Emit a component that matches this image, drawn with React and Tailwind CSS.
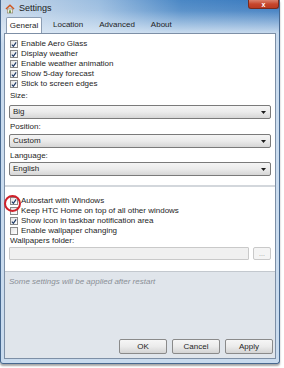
import React from 'react';

const font = { fontFamily: '"Segoe UI", "Liberation Sans", Arial, sans-serif' };

function Check({ checked }) {
  return (
    <span className="w-[8px] h-[8px] shrink-0 border border-[#8a8a8a] bg-gradient-to-br from-[#e4e4e4] to-white flex items-center justify-center">
      {checked && (
        <svg width="7" height="7" viewBox="0 0 7 7">
          <path d="M1 3.6 L2.8 5.6 L6 1" fill="none" stroke="#1f3a66" strokeWidth="1.4" />
        </svg>
      )}
    </span>
  );
}

function Row({ checked, children }) {
  return (
    <div className="h-[10px] flex items-center gap-[3px] text-[8px] text-[#1e1e1e] leading-none">
      <Check checked={checked} />
      <span>{children}</span>
    </div>
  );
}

function Select({ value }) {
  return (
    <div className="h-[14px] mr-[4px] -ml-[1px] rounded-[2px] border border-[#7a7a7a] bg-gradient-to-b from-[#f4f4f4] via-[#ebebeb] to-[#d6d6d6] flex items-center justify-between pl-[3px] pr-[4px] text-[8px] text-[#1e1e1e] leading-none">
      <span>{value}</span>
      <svg width="5" height="3" viewBox="0 0 5 3">
        <path d="M0 0 H5 L2.5 3 Z" fill="#1b1b1b" />
      </svg>
    </div>
  );
}

function Button({ children }) {
  return (
    <div className="w-[48px] h-[15px] rounded-[2px] border border-[#8a8a8a] bg-gradient-to-b from-[#f6f6f6] via-[#ebebeb] to-[#d4d4d4] flex items-center justify-center text-[8px] text-[#1e1e1e] leading-none">
      {children}
    </div>
  );
}

export default function App() {
  return (
    <div className="w-[284px] h-[368px] bg-white relative overflow-hidden" style={font}>
      <div className="w-[280px] h-[364px] flex flex-col border-l border-r border-b border-[#47688f] rounded-b-[3px] shadow-[0_2px_2px_rgba(0,0,0,0.35)] bg-[linear-gradient(to_bottom,rgba(255,255,255,0)_0%,rgba(255,255,255,0.1)_3%,rgba(221,233,245,0.85)_9%,#c9dbee_12%,#c9dbee_100%),linear-gradient(to_right,#c5d6e9_0%,#9bbde0_35%,#4a87c5_65%,#3a7abf_100%)]">
        <div className="h-[17px] flex items-center pl-[4px] gap-[4px] text-[9px] text-[#1b1b1b] leading-none">
          <svg width="10" height="10" viewBox="0 0 10 10">
            <path d="M1 5 L5 1.2 L9 5" fill="none" stroke="#d2561e" strokeWidth="1.5" />
            <rect x="2.3" y="5" width="5.4" height="4" fill="#f3efe4" stroke="#8a7a5a" strokeWidth="0.6" />
            <rect x="4.2" y="6.3" width="1.6" height="2.7" fill="#5a8b3a" />
          </svg>
          <span>Settings</span>
        </div>
        <div className="h-[16px] flex items-end pl-[5px] text-[8px] text-[#1e1e1e] leading-none">
          <div className="w-[36px] h-[16px] bg-white rounded-t-[2px] border-t border-l border-r border-[#8c9db3] flex items-center justify-center">General</div>
          <div className="h-[16px] flex items-center ml-[11px]">Location</div>
          <div className="h-[16px] flex items-center ml-[16px]">Advanced</div>
          <div className="h-[16px] flex items-center ml-[16px]">About</div>
        </div>
        <div className="flex-1 mx-[3px] mb-[4px] border border-[#7d8fa6] flex flex-col bg-[#e0e5eb]">
          <div className="h-[237px] bg-white flex flex-col pl-[5px]">
            <div className="pt-[5px]">
              <Row checked>Enable Aero Glass</Row>
              <Row checked>Display weather</Row>
              <Row checked>Enable weather animation</Row>
              <Row checked>Show 5-day forecast</Row>
              <Row checked>Stick to screen edges</Row>
            </div>
            <div className="mt-[2px] h-[10px] flex items-center text-[8px] text-[#1e1e1e] leading-none">Size:</div>
            <div className="mt-[4px]"><Select value="Big" /></div>
            <div className="mt-[3px] h-[10px] flex items-center text-[8px] text-[#1e1e1e] leading-none">Position:</div>
            <div className="mt-[2px]"><Select value="Custom" /></div>
            <div className="mt-[3px] h-[10px] flex items-center text-[8px] text-[#1e1e1e] leading-none">Language:</div>
            <div className="mt-[1px]"><Select value="English" /></div>
            <div className="mt-[9px] -ml-[5px] h-[2px] bg-[#d3d7dc]" />
            <div className="mt-[9px]">
              <Row checked>Autostart with Windows</Row>
              <Row>Keep HTC Home on top of all other windows</Row>
              <Row checked>Show icon in taskbar notification area</Row>
              <Row>Enable wallpaper changing</Row>
            </div>
            <div className="h-[10px] flex items-center text-[8px] text-[#1e1e1e] leading-none">Wallpapers folder:</div>
            <div className="mt-[1px] flex gap-[4px] pr-[4px] -ml-[1px]">
              <div className="flex-1 h-[13px] border border-[#c9c9c9] bg-[#f0f0f0] rounded-[1px]" />
              <div className="w-[18px] h-[13px] border border-[#c9c9c9] bg-[#f4f4f4] rounded-[2px] flex items-center justify-center text-[7px] text-[#9a9a9a] leading-none">...</div>
            </div>
          </div>
          <div className="h-[1px] bg-[#c3c8ce]" />
          <div className="flex-1 flex flex-col">
            <div className="mt-[5px] ml-[4px] h-[10px] flex items-center text-[8px] italic text-[#8a8f96] leading-none">Some settings will be applied after restart</div>
            <div className="flex-1" />
            <div className="flex justify-end gap-[5px] pr-[2px] pb-[4px]">
              <Button>OK</Button>
              <Button>Cancel</Button>
              <Button>Apply</Button>
            </div>
          </div>
        </div>
      </div>
      <div className="absolute left-[248px] top-0 w-[31px] h-[9px] rounded-b-[3px] border border-t-0 border-[#7a2a1e] bg-gradient-to-b from-[#d9806c] via-[#c7462c] to-[#b83a22] flex items-center justify-center text-white text-[7px] font-bold leading-none">x</div>
      <div className="absolute left-[4px] top-[195px] w-[17px] h-[17px] rounded-full border-2 border-[#d0202a]" />
    </div>
  );
}
